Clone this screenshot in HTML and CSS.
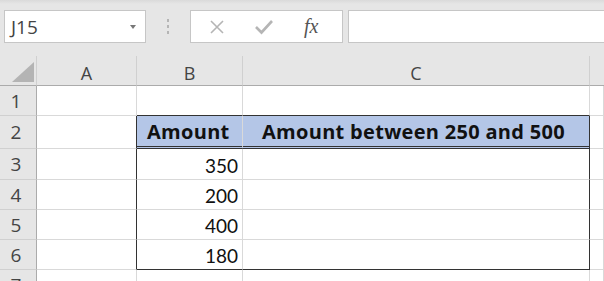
FILE: index.html
```html
<!DOCTYPE html>
<html lang="en">
<head>
    <meta charset="UTF-8">
    <title>Sheet</title>
    <link rel="stylesheet" href="styles.css">
</head>
<body>
    <div class="toolbar">
        <div class="namebox">
            <span class="ref">J15</span>
            <span class="caret"></span>
        </div>
        <div class="grip"><span></span><span></span><span></span></div>
        <div class="fxbox">
            <svg class="icon" width="18" height="18" viewBox="0 0 18 18">
                <path d="M3 3 L15 15 M15 3 L3 15" stroke="#b5b5b5" stroke-width="1.6" fill="none"/>
            </svg>
            <svg class="icon" width="20" height="18" viewBox="0 0 20 18">
                <path d="M2 9 L7.5 14.5 L18 3" stroke="#b5b5b5" stroke-width="2.6" fill="none"/>
            </svg>
            <span class="fx">fx</span>
        </div>
        <div class="formula"></div>
    </div>

    <div class="sheet">
        <div class="corner"><span class="tri"></span></div>
        <div class="colhead">A</div>
        <div class="colhead">B</div>
        <div class="colhead">C</div>
        <div class="colhead last"></div>

        <div class="rowhead">1</div>
        <div class="cell"></div>
        <div class="cell top"></div>
        <div class="cell top"></div>
        <div class="cell"></div>

        <div class="rowhead">2</div>
        <div class="cell edge"></div>
        <div class="cell head">Amount</div>
        <div class="cell head side">Amount between 250 and 500</div>
        <div class="cell"></div>

        <div class="rowhead">3</div>
        <div class="cell edge"></div>
        <div class="cell num">350</div>
        <div class="cell side"></div>
        <div class="cell"></div>

        <div class="rowhead">4</div>
        <div class="cell edge"></div>
        <div class="cell num">200</div>
        <div class="cell side"></div>
        <div class="cell"></div>

        <div class="rowhead">5</div>
        <div class="cell edge"></div>
        <div class="cell num">400</div>
        <div class="cell side"></div>
        <div class="cell"></div>

        <div class="rowhead">6</div>
        <div class="cell edge"></div>
        <div class="cell num bottom">180</div>
        <div class="cell side bottom"></div>
        <div class="cell"></div>

        <div class="rowhead">7</div>
        <div class="cell"></div>
        <div class="cell"></div>
        <div class="cell"></div>
        <div class="cell"></div>
    </div>
</body>
</html>
```

FILE: styles.css
```css
* {
    box-sizing: border-box;
}
body {
    margin: 0;
    width: 604px;
    height: 281px;
    overflow: hidden;
    background-color: #e6e6e6;
    font-family: 'Open Sans', sans-serif;
}
.toolbar {
    height: 56px;
    display: flex;
    align-items: flex-start;
    padding: 10px 0 0 4px;
    background: linear-gradient(#dadada, #e6e6e6 4px);
}
.namebox {
    width: 142px;
    height: 33px;
    background-color: #fff;
    border: 1px solid #c6c6c6;
    display: flex;
    align-items: center;
    justify-content: space-between;
    padding: 0 9px 0 6px;
}
.ref {
    font-size: 19px;
    color: #444;
}
.caret {
    width: 0;
    height: 0;
    border-left: 3px solid transparent;
    border-right: 3px solid transparent;
    border-top: 4px solid #777;
}
.grip {
    width: 44px;
    height: 33px;
    display: flex;
    flex-direction: column;
    align-items: center;
    justify-content: center;
    gap: 3px;
}
.grip span {
    width: 2px;
    height: 3px;
    background-color: #b5b5b5;
}
.fxbox {
    width: 153px;
    height: 33px;
    background-color: #fff;
    border: 1px solid #c6c6c6;
    display: flex;
    align-items: center;
    padding-left: 17px;
    gap: 28px;
}
.fx {
    font-family: 'Liberation Serif', serif;
    font-style: italic;
    font-size: 20px;
    color: #555;
    margin-left: 2px;
}
.formula {
    flex: 1;
    height: 33px;
    margin-left: 5px;
    background-color: #fff;
    border: 1px solid #c6c6c6;
    border-right: none;
}
.sheet {
    display: grid;
    grid-template-columns: 37px 100px 106px 347px 1fr;
    grid-template-rows: 30px 30px 33px 31px 30px 30px 30px 30px;
    background-color: #fff;
}
.corner, .colhead, .rowhead {
    background-color: #e6e6e6;
    color: #444;
    font-size: 18px;
}
.corner {
    border-bottom: 1px solid #ababab;
    border-right: 1px solid #d0d0d0;
    position: relative;
}
.tri {
    position: absolute;
    right: 2px;
    bottom: 3px;
    width: 0;
    height: 0;
    border-left: 22px solid transparent;
    border-bottom: 20px solid #b4b4b4;
}
.colhead {
    display: flex;
    align-items: center;
    justify-content: center;
    padding-top: 4px;
    border-bottom: 1px solid #ababab;
    border-right: 1px solid #d0d0d0;
}
.colhead.last {
    border-right: none;
}
.rowhead {
    display: flex;
    align-items: center;
    justify-content: center;
    padding-right: 4px;
    border-right: 1px solid #ababab;
    border-bottom: 1px solid #d0d0d0;
    font-size: 19px;
}
.cell {
    border-right: 1px solid #d9d9d9;
    border-bottom: 1px solid #d9d9d9;
    font-family: 'Lato', sans-serif;
    font-size: 19px;
    color: #111;
    display: flex;
    align-items: center;
}
.cell.top {
    border-bottom-color: #333;
}
.cell.edge {
    border-right-color: #333;
}
.cell.side {
    border-right-color: #333;
}
.cell.head {
    background-color: #b4c6e7;
    font-family: 'Open Sans', sans-serif;
    font-weight: bold;
    font-size: 20px;
    letter-spacing: 0.3px;
    border-bottom: 3px double #333;
    padding-left: 10px;
    padding-top: 1px;
}
.cell.head.side {
    padding-left: 19px;
    border-right-color: #333;
}
.cell.num {
    justify-content: flex-end;
    padding-right: 4px;
    padding-top: 2px;
}
.cell.bottom {
    border-bottom-color: #333;
}
```
